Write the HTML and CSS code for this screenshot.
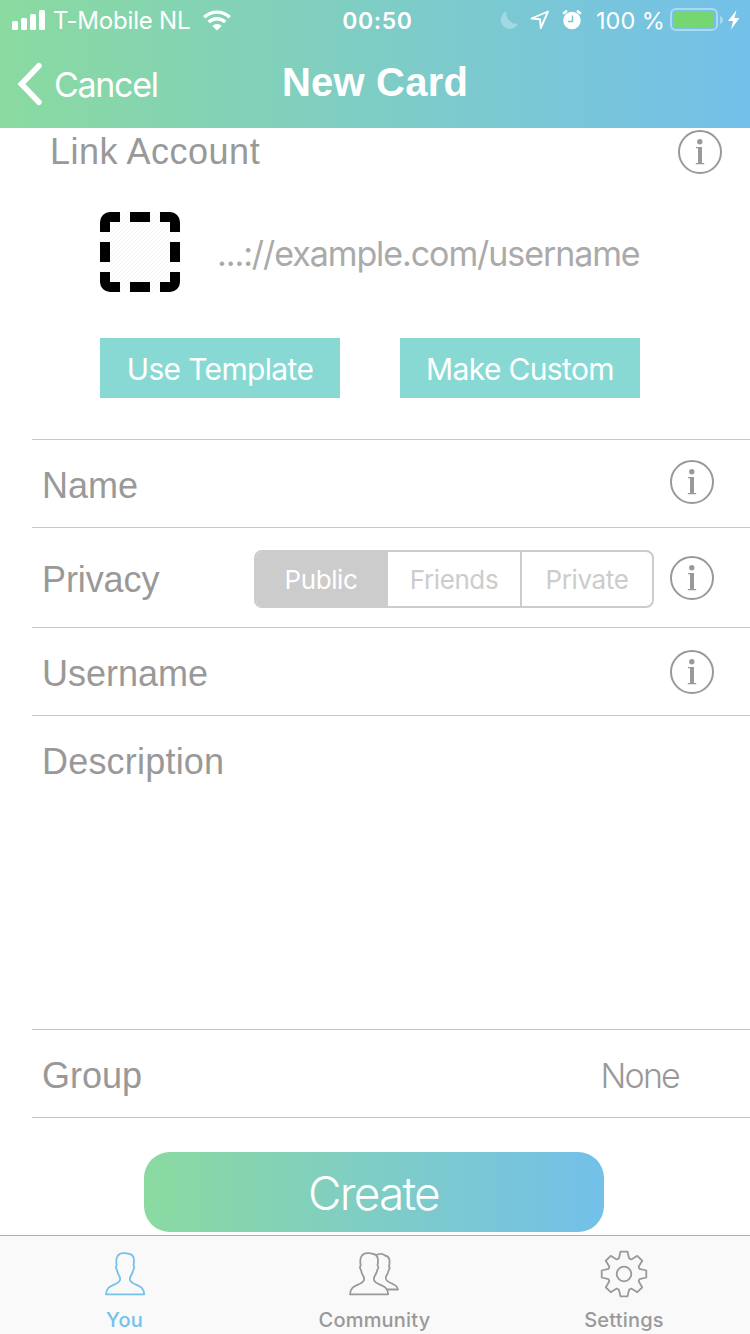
FILE: index.html
```html
<!DOCTYPE html>
<html lang="en">
<head>
<meta charset="utf-8">
<title>New Card</title>
<link rel="stylesheet" href="styles.css">
</head>
<body>
<svg class="defs" aria-hidden="true">
  <symbol id="info" viewBox="0 0 44 44">
    <circle cx="22" cy="22" r="21" fill="none" stroke="currentColor" stroke-width="2"/>
    <circle cx="21.800" cy="11.700" r="2.700" fill="currentColor"/>
    <path fill="currentColor" d="M18 17h6v16h2.200v1.300h-8.400V33H20V18.300h-2z"/>
  </symbol>
</svg>
<div class="screen">
  <header class="header">
    <div class="status">
      <div class="status-left">
        <svg class="signal" viewBox="0 0 34 20" fill="#fff"><rect x="0" y="11" width="6" height="9" rx="1.500"/><rect x="9" y="8" width="6" height="12" rx="1.500"/><rect x="18" y="4" width="6" height="16" rx="1.500"/><rect x="27" y="0" width="6" height="20" rx="1.500"/></svg>
        <span class="carrier">T-Mobile NL</span>
        <svg class="wifi" viewBox="0 0 28 21" fill="none" stroke="#fff" stroke-width="3.400"><path d="M1.200 7.300a18.500 18.500 0 0 1 25.600 0"/><path d="M5.700 12.100a12 12 0 0 1 16.600 0"/><path fill="#fff" stroke="none" d="M9.300 16a6.800 6.800 0 0 1 9.400 0L14 20.500z"/></svg>
      </div>
      <div class="clock">00:50</div>
      <div class="status-right">
        <svg class="moon" viewBox="0 0 18 18"><path fill="#fff" opacity=".3" d="M6.500.5A9 9 0 1 0 18 12.500 10 10 0 0 1 6.500.5z"/></svg>
        <svg class="arrow" viewBox="0 0 20 20"><path fill="none" stroke="#fff" stroke-width="1.900" stroke-linejoin="round" d="M18 1.500 1.500 8.500l8.500.800.800 8.700z"/></svg>
        <svg class="alarm" viewBox="0 0 20 20"><circle cx="10" cy="10.500" r="8.700" fill="#fff"/><path stroke="#fff" stroke-width="2.600" stroke-linecap="round" d="M2 3l2.200-1.600M18 3l-2.200-1.600"/><path fill="none" stroke="#7ac6cf" stroke-width="1.500" d="M10.500 5.500v6H6"/></svg>
        <span class="percent">100 %</span>
        <svg class="battery" viewBox="0 0 54 24"><rect x="1" y="1" width="46" height="21" rx="5" fill="none" stroke="#fff" stroke-opacity=".4" stroke-width="2"/><rect x="4" y="4" width="40" height="15" rx="2" fill="#76d672"/><path fill="#fff" opacity=".4" d="M50 8c4 1.500 4 6.500 0 8z"/></svg>
        <svg class="bolt" viewBox="0 0 12 20"><path fill="#fff" d="M8.500 0 0 11h5L3 19.500 11.500 8h-5z"/></svg>
      </div>
    </div>
    <nav class="nav">
      <div class="back">
        <svg class="chevron" viewBox="0 0 26 44"><path fill="none" stroke="#fff" stroke-width="5.600" stroke-linecap="round" stroke-linejoin="miter" d="M22 3.800 4.400 22 22 40.200"/></svg>
        <span class="cancel">Cancel</span>
      </div>
      <h1 class="title">New Card</h1>
    </nav>
  </header>

  <main class="form">
    <section class="link">
      <div class="link-head">
        <span class="label link-label">Link Account</span>
        <svg class="info"><use href="#info"/></svg>
      </div>
      <div class="link-url">
        <svg class="dashed" viewBox="0 0 80 80">
          <defs>
            <pattern id="hatch" width="4" height="4" patternUnits="userSpaceOnUse"><path stroke="#f5f5f5" stroke-width="1" d="M-1 1 1-1M0 4 4 0M3 5 5 3"/></pattern>
            <clipPath id="round"><rect width="80" height="80" rx="10"/></clipPath>
          </defs>
          <g clip-path="url(#round)">
            <rect width="80" height="80" fill="url(#hatch)"/>
            <path d="M0 0h20v10H10v10H0zM30 0h20v10H30zM60 0h20v20H70V10H60zM0 30h10v20H0zM70 30h10v20H70zM0 60h10v10h10v10H0zM30 70h20v10H30zM60 70h10V60h10v20H60z"/>
          </g>
        </svg>
        <span class="url">...://example.com/username</span>
      </div>
      <div class="buttons">
        <div class="button"><span>Use Template</span></div>
        <div class="button"><span>Make Custom</span></div>
      </div>
    </section>
    <section class="row name"><span class="label l-name">Name</span><svg class="info"><use href="#info"/></svg></section>
    <section class="row privacy">
      <span class="label l-privacy">Privacy</span>
      <div class="segments">
        <div class="segment active">Public</div>
        <div class="segment">Friends</div>
        <div class="segment last">Private</div>
      </div>
      <svg class="info"><use href="#info"/></svg>
    </section>
    <section class="row username"><span class="label l-username">Username</span><svg class="info"><use href="#info"/></svg></section>
    <section class="row description"><span class="label l-description">Description</span></section>
    <section class="row group"><span class="label l-group">Group</span><span class="none">None</span></section>
    <section class="submit"><div class="create"><span>Create</span></div></section>
  </main>

  <footer class="tabs">
    <div class="tab tab-you">
      <svg class="icon-you" viewBox="0 0 40 44"><path fill="none" stroke="currentColor" stroke-width="1.800" stroke-linejoin="round" d="M1 42.300C1.500 35 6 34 10.500 32 15 30 16 27.500 14.500 24.500 13 22 12.200 20.500 12 18c-1.500-2-1.200-3.500-.3-4.500C10 4.500 13.500 1 19 1.200c3-.4 4 .8 5.500.8 3.500.5 5.500 4 4 11.500.9 1 1.200 2.500-.3 4.500-.2 2.500-1.200 4-2.700 6.500-1.500 3-.5 5.500 4 7.500C34 34 38.700 35 39.200 42.300z"/></svg>
      <span class="tab-text">You</span>
    </div>
    <div class="tab tab-community">
      <svg class="icon-community" viewBox="0 0 52 44" fill="none" stroke="currentColor" stroke-width="1.800" stroke-linejoin="round"><path d="M1 42.300C1.500 35 6 34 10.500 32 15 30 16 27.500 14.500 24.500 13 22 12.200 20.500 12 18c-1.500-2-1.200-3.500-.3-4.500C10 4.500 13.500 1 19 1.200c3-.4 4 .8 5.500.8 3.500.5 5.500 4 4 11.500.9 1 1.200 2.500-.3 4.500-.2 2.500-1.200 4-2.700 6.500-1.500 3-.5 5.500 4 7.500C34 34 38.700 35 39.200 42.300z"/><path d="M26.500 3.500C30 1.500 34 2 36 3.500c4 .5 5.500 4 4 11 .8 1 .8 2.500-.5 4-.2 2.500-1 3.500-2.300 5.500-1.200 3-.5 4.500 3.500 6.500 4 1.500 7.800 3 8.300 7H37.500"/></svg>
      <span class="tab-text">Community</span>
    </div>
    <div class="tab tab-settings">
      <svg class="icon-gear" viewBox="-24 -24 48 48" fill="none" stroke="currentColor" stroke-width="1.800" stroke-linejoin="round"><circle r="7.300"/><path d="M-5.200-15.500-3.500-22.300H3.500L5.200-15.500 7.300-14.600 13.300-18.200 18.200-13.300 14.600-7.300 15.500-5.200 22.300-3.500V3.500L15.500 5.200 14.600 7.300 18.200 13.300 13.300 18.200 7.300 14.600 5.200 15.500 3.500 22.300H-3.500L-5.200 15.500-7.300 14.600-13.300 18.200-18.200 13.300-14.600 7.300-15.500 5.200-22.300 3.500V-3.500L-15.500-5.200-14.600-7.300-18.200-13.300-13.300-18.200-7.300-14.600z"/></svg>
      <span class="tab-text">Settings</span>
    </div>
  </footer>
</div>
</body>
</html>
```

FILE: styles.css
```css
* { box-sizing: border-box; }
body { margin: 0; background: #fff; font-family: Inter, sans-serif; }
svg { display: block; flex: none; }
span { white-space: nowrap; }
.defs { display: none; }
.screen { width: 750px; height: 1334px; display: flex; flex-direction: column; overflow: hidden; }

.header { height: 128px; flex: none; background: linear-gradient(90deg, #8adaa0, #73c0ea); color: #fff; }
.status { height: 40px; display: grid; grid-template-columns: 300px 150px 300px; align-items: center; font-size: 24px; line-height: 38px; }
.status-left { display: flex; align-items: center; padding-left: 12px; }
.signal { width: 34px; height: 20px; }
.carrier { margin-left: 7px; width: 150px; letter-spacing: -.2px; padding-top: 2px; }
.wifi { width: 28px; height: 21px; }
.clock { text-align: center; font-weight: 600; letter-spacing: .6px; font-size: 23px; padding: 2px 0 0 5px; }
.status-right { display: flex; align-items: center; padding-left: 50px; }
.moon { width: 18px; height: 18px; }
.arrow { width: 20px; height: 20px; margin-left: 12px; }
.alarm { width: 20px; height: 20px; margin-left: 12px; }
.percent { margin-left: 14px; width: 74px; font-size: 23.500px; padding-top: 2px; }
.battery { width: 54px; height: 24px; }
.bolt { width: 12px; height: 20px; margin-left: 4px; }
.nav { height: 88px; display: grid; grid-template-columns: 250px 250px 250px; align-items: center; }
.back { display: flex; align-items: center; padding-left: 17px; }
.chevron { width: 26px; height: 44px; }
.cancel { margin-left: 11px; font-size: 34px; font-weight: 400; letter-spacing: -1.300px; }
.title { margin: 0; text-align: center; font: bold 40px/48px "Liberation Sans", sans-serif; letter-spacing: .2px; padding-bottom: 4px; white-space: nowrap; }

.form { height: 1107px; flex: none; }
.label { font: 36px/44px "Liberation Sans", sans-serif; color: #999; }
.info { width: 44px; height: 44px; color: #999; }
.link { height: 311px; }
.link-head { display: flex; justify-content: space-between; padding: 2px 28px 0 50px; }
.link-label { letter-spacing: .5px; }
.link-url { display: flex; align-items: center; height: 80px; margin: 38px 0 0 100px; }
.dashed { width: 80px; height: 80px; }
.url { margin-left: 37px; font-size: 34px; font-weight: 400; letter-spacing: -1.080px; color: #aaa; padding-top: 2px; }
.buttons { display: flex; gap: 60px; margin: 46px 0 0 100px; }
.button { width: 240px; height: 60px; background: #88d9d3; color: #fff; display: flex; align-items: center; justify-content: center; font-size: 30px; font-weight: 400; letter-spacing: -.650px; padding-top: 2px; }
.row { margin-left: 32px; border-top: 1px solid #c8c7cc; display: flex; align-items: flex-start; padding: 0 36px 0 10px; justify-content: space-between; }
.name { height: 88px; padding-top: 20px; }
.privacy { height: 100px; padding-top: 28px; }
.username { height: 88px; padding-top: 22px; }
.description { height: 314px; padding-top: 24px; }
.group { height: 89px; border-bottom: 1px solid #c8c7cc; padding: 24px 70px 0 10px; }
.name .label { padding-top: 4px; }
.username .label { padding-top: 2px; }
.l-description { letter-spacing: .2px; }
.privacy .label { width: 212px; padding-top: 2px; letter-spacing: -.1px; }
.segments { display: flex; width: 400px; height: 58px; margin: -6px 16px 0 0; border: 2px solid #ccc; border-radius: 8px; overflow: hidden; flex: none; }
.segment { flex: none; width: 132px; display: flex; align-items: center; justify-content: center; color: #ccc; font-size: 26px; font-weight: 400; letter-spacing: -.4px; }
.segment.last { border-left: 2px solid #ccc; }
.segment.active { background: #ccc; color: #fff; padding-right: 2px; }
.none { font: 300 34px/44px Inter, sans-serif; letter-spacing: -1.800px; margin-right: 1px; color: #999; }
.submit { padding: 34px 0 0 144px; }
.create { width: 460px; height: 80px; border-radius: 26px; background: linear-gradient(90deg, #8adaa0, #73c0ea); display: flex; align-items: center; justify-content: center; color: #fff; font-size: 46px; font-weight: 300; letter-spacing: -1.800px; padding: 1px 1px 0 0; }

.tabs { height: 99px; flex: none; border-top: 1px solid #b0b0b0; background: #f9f9f9; display: grid; grid-template-columns: repeat(3, 250px); color: #999; }
.tab { display: flex; flex-direction: column; align-items: center; padding: 16px 1px 0 0; }
.tab-you { color: #74c1ea; padding-right: 0; }
.icon-you { width: 40px; height: 44px; }
.icon-community { width: 52px; height: 44px; }
.icon-gear { width: 48px; height: 48px; margin-top: -2px; margin-bottom: -2px; }
.tab-settings { padding-right: 2px; }
.tab-text { margin-top: 11px; font-size: 20px; line-height: 26px; font-weight: 500; letter-spacing: .2px; }
.tab-you .tab-text { margin-left: -1px; }
```
